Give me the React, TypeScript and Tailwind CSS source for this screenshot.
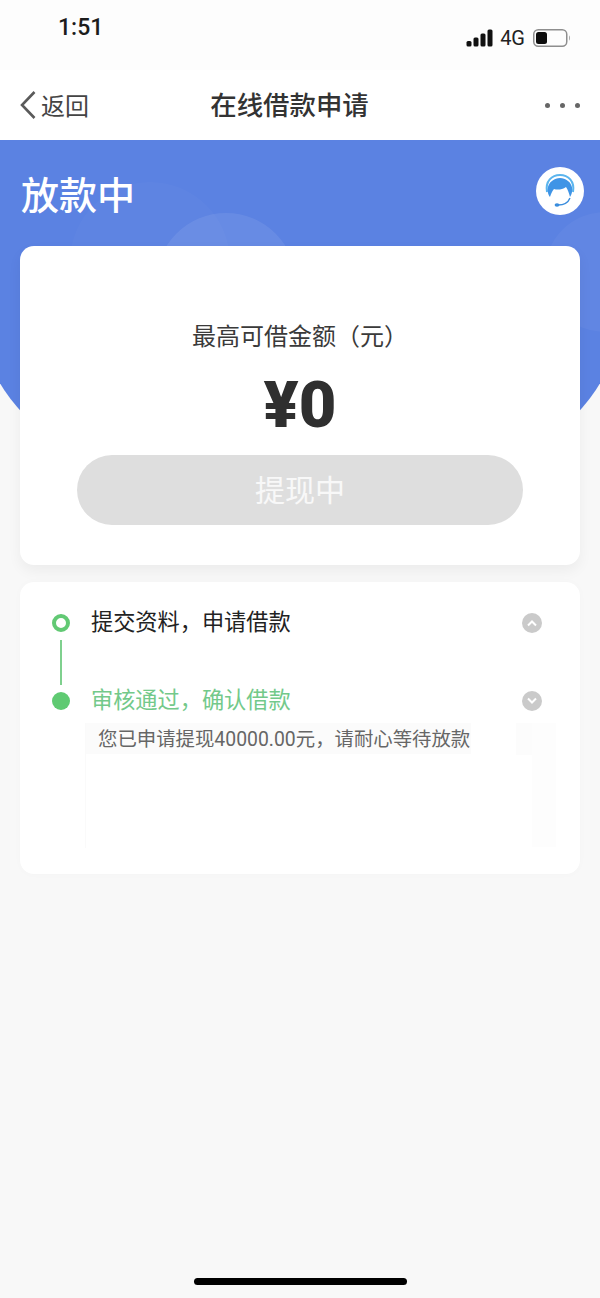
import React from 'react';

const cjk = { fontFamily: '"Noto Sans CJK SC", "Noto Sans", sans-serif' };

function StatusBar() {
  return (
    <div className="h-[70px] flex justify-between pl-[58px] pr-[29px] bg-[#fdfdfd]">
      <div className="mt-[14px] h-[28px] text-[23px] leading-[28px] font-medium text-[#1c1c1c] font-['Roboto',sans-serif]">1:51</div>
      <div className="mt-[28px] h-[20px] flex items-center">
        <svg width="28" height="20" viewBox="0 0 28 20" className="mr-[6px]">
          <rect x="0.5" y="13" width="5" height="5.5" rx="1.5" fill="#111" />
          <rect x="7.5" y="9.5" width="5" height="9" rx="1.5" fill="#111" />
          <rect x="14.5" y="5.5" width="5" height="13" rx="1.5" fill="#111" />
          <rect x="21.5" y="1.5" width="5" height="17" rx="1.5" fill="#111" />
        </svg>
        <span className="text-[20px] leading-[20px] text-[#222] font-['Roboto',sans-serif] mr-[8px]">4G</span>
        <svg width="38" height="20" viewBox="0 0 38 20">
          <rect x="0.75" y="1.75" width="33" height="16.5" rx="4.5" fill="none" stroke="#8e8e8e" strokeWidth="1.5" />
          <rect x="3" y="4" width="11" height="12" rx="2.5" fill="#0d0d0d" />
          <path d="M36 7.5c1 .6 1 4.4 0 5z" fill="#8e8e8e" />
        </svg>
      </div>
    </div>
  );
}

function NavBar() {
  return (
    <div className="h-[70px] grid grid-cols-[1fr_auto_1fr] items-center bg-white pl-[19px] pr-[20px]" style={cjk}>
      <div className="flex items-center">
        <svg width="18" height="30" viewBox="0 0 18 30">
          <path d="M15.5 2 3 15l12.5 13" fill="none" stroke="#5a5a5a" strokeWidth="2.6" />
        </svg>
        <span className="ml-[4px] text-[24px] leading-[30px] text-[#444]">返回</span>
      </div>
      <div className="mr-[20px] pb-[2px] text-[26.4px] leading-[36px] font-medium text-[#333]">在线借款申请</div>
      <div className="flex justify-end gap-[10px]">
        <span className="w-[5px] h-[5px] rounded-full bg-[#666]" />
        <span className="w-[5px] h-[5px] rounded-full bg-[#666]" />
        <span className="w-[5px] h-[5px] rounded-full bg-[#666]" />
      </div>
    </div>
  );
}

function ServiceIcon() {
  return (
    <div className="w-[48px] h-[48px] rounded-full bg-white">
      <svg width="48" height="48" viewBox="0 0 48 48">
        <path d="M11 25C9 14 16 8 24 8s15 6 13 17" fill="none" stroke="#5bb5ee" strokeWidth="2" />
        <path d="M14 30C9 23 12 12 24 11c12 1 15 12 10 19-1-4-2-7-4-10-4 3-9 3-12 2-2 2-3 5-4 8z" fill="#3f94e6" />
        <path d="M34 31c-2 5-6 7-12 7" fill="none" stroke="#3a8ddd" strokeWidth="1.4" />
        <ellipse cx="21" cy="38" rx="2.4" ry="1.8" fill="#3a8ddd" />
      </svg>
    </div>
  );
}

function Chevron({ up }: { up?: boolean }) {
  return (
    <div className="w-[20px] h-[20px] rounded-full bg-[#cacaca] flex items-center justify-center">
      <svg width="12" height="8" viewBox="0 0 12 8">
        <path d={up ? 'M2 6.5 6 2.5l4 4' : 'M2 1.5 6 5.5l4-4'} fill="none" stroke="#fff" strokeWidth="2" />
      </svg>
    </div>
  );
}

function AmountCard() {
  return (
    <div className="h-[319px] rounded-[14px] bg-white shadow-[0_6px_14px_rgba(0,0,0,0.05)] flex flex-col items-center pt-[72px]">
      <div className="text-[24px] leading-[34px] text-[#3a3a3a]">最高可借金额（元）</div>
      <div className="mt-[18px] h-[70px] text-[65px] leading-[70px] font-black text-[#2f2f2f] font-['Roboto',sans-serif]">¥0</div>
      <div className="mt-[15px] w-[446px] h-[70px] pb-[4px] rounded-full bg-[#dedede] flex items-center justify-center text-[30px] text-white/80">
        提现中
      </div>
    </div>
  );
}

function StepsCard() {
  return (
    <div className="mt-[17px] h-[292px] rounded-[14px] bg-white shadow-[0_0_8px_rgba(0,0,0,0.02)] pt-[24px] pl-[32px] pr-[38px]">
      <div className="flex items-center h-[34px]">
        <div className="w-[18px] h-[18px] rounded-full border-[4px] border-[#62c974]" />
        <div className="ml-[21px] pb-[6px] flex-1 text-[22.2px] leading-[34px] text-[#222]">提交资料，申请借款</div>
        <Chevron up />
      </div>
      <div className="ml-[8px] w-[2px] h-[45px] bg-[#7fd08e]" />
      <div className="mt-[-1px] flex items-center h-[34px]">
        <div className="w-[18px] h-[18px] rounded-full bg-[#5fca72]" />
        <div className="ml-[21px] pb-[6px] flex-1 text-[22.2px] leading-[34px] text-[#73c98a]">审核通过，确认借款</div>
        <Chevron />
      </div>
      <div className="ml-[33px] mt-[5px] mr-[-14px] h-[125px] flex justify-between border-l border-[#fafafa]">
        <div className="w-[385px] h-[31px] pl-[12px] bg-[#fbfbfb] text-[19.4px] leading-[29px] text-[#666] whitespace-nowrap">
          您已申请提现<span className="font-['Roboto',sans-serif]">40000.00</span>元，请耐心等待放款
        </div>
        <div className="w-[40px] h-[32px] bg-[#fcfcfc] flex justify-end">
          <div className="w-[24px] h-[124px] bg-[#fdfdfd]" />
        </div>
      </div>
    </div>
  );
}

export default function App() {
  return (
    <div className="w-[600px] h-[1298px] flex flex-col bg-[#f8f8f8] overflow-hidden" style={cjk}>
      <StatusBar />
      <NavBar />
      <div className="relative flex-1 px-[20px]">
        {/* blue arc behind the cards */}
        <div className="absolute left-[-20px] top-0 w-[640px] h-[373px] bg-[#5b82e2] rounded-b-[320px_199px] overflow-hidden">
          <div className="absolute left-[90px] top-[42px] w-[160px] h-[160px] rounded-full bg-white/[0.025]" />
          <div className="absolute left-[176px] top-[73px] w-[140px] h-[140px] rounded-full bg-white/[0.08]" />
          <div className="absolute left-[565px] top-[72px] w-[120px] h-[120px] rounded-full bg-white/[0.04]" />
        </div>
        <div className="relative">
          <div className="h-[106px] flex justify-between pt-[27px]">
            <div className="ml-[1px] mt-[-3px] h-[58px] font-medium text-[38px] leading-[58px] text-white">放款中</div>
            <div className="mr-[-4px]"><ServiceIcon /></div>
          </div>
          <AmountCard />
          <StepsCard />
        </div>
      </div>
      <div className="mb-[13px] mx-auto w-[213px] h-[7px] rounded-full bg-black" />
    </div>
  );
}
